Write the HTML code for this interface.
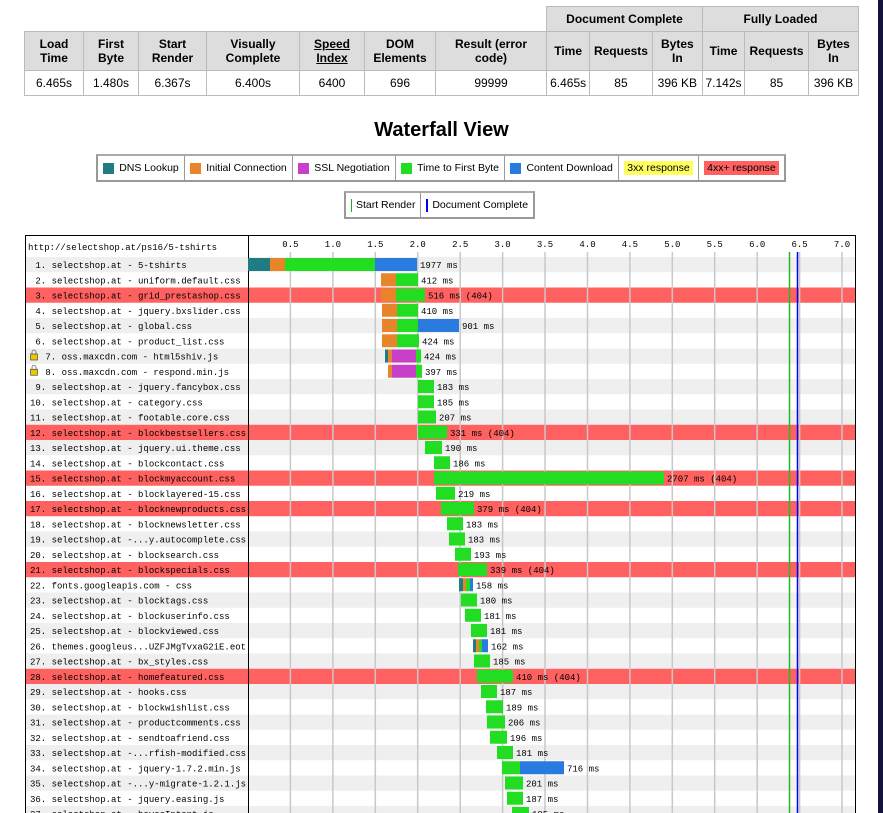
<!DOCTYPE html>
<html><head><meta charset="utf-8"><style>
body{margin:0;background:#fff;width:883px;height:813px;overflow:hidden;position:relative;font-family:"Liberation Sans",Arial,sans-serif}
table.r{position:absolute;left:24px;top:6px;border-collapse:collapse;font-size:12px}
table.r td,table.r th{border:1px solid #bbb;text-align:center;padding:0}
table.r th{background:#ddd;font-weight:bold}
h1{position:absolute;left:0;width:883px;top:119px;margin:0;text-align:center;font-size:20px;font-weight:bold}
.leg{position:absolute;border:2px solid #999;border-top-color:#aaa;display:flex;font-size:10.5px;height:24px;box-sizing:border-box;height:28px}
.leg div{border-left:1px solid #999;display:flex;align-items:center;padding:0 4px;white-space:nowrap;flex:auto;justify-content:center}
.leg div:first-child{border-left:none}
.sw{display:inline-block;width:11px;height:11px;margin-right:5px}
svg text{font-family:"Liberation Mono",monospace;font-size:9px;white-space:pre}
</style></head><body>
<table class="r">
<tr style="height:25px"><td colspan="7" style="border:none;border-bottom:1px solid #bbb;background:#fff"></td><th colspan="3" style="width:155px">Document Complete</th><th colspan="3">Fully Loaded</th></tr>
<tr style="height:39px"><th style="width:58px">Load<br>Time</th><th style="width:54px">First<br>Byte</th><th style="width:67px">Start<br>Render</th><th style="width:92px">Visually<br>Complete</th><th style="width:64px"><u>Speed<br>Index</u></th><th style="width:70px">DOM<br>Elements</th><th style="width:110px">Result (error<br>code)</th><th style="width:42px">Time</th><th style="width:61px">Requests</th><th style="width:49px">Bytes<br>In</th><th style="width:41px">Time</th><th style="width:63px">Requests</th><th style="width:49px">Bytes<br>In</th></tr>
<tr style="height:25px"><td>6.465s</td><td>1.480s</td><td>6.367s</td><td>6.400s</td><td>6400</td><td>696</td><td>99999</td><td>6.465s</td><td>85</td><td>396 KB</td><td>7.142s</td><td>85</td><td>396 KB</td></tr>
</table>
<h1>Waterfall View</h1>
<div class="leg" style="left:96px;top:154px;width:690px">
<div><span class="sw" style="background:#1f7c83"></span>DNS Lookup</div>
<div><span class="sw" style="background:#e8852b"></span>Initial Connection</div>
<div><span class="sw" style="background:#c840c8"></span>SSL Negotiation</div>
<div><span class="sw" style="background:#22dd22"></span>Time to First Byte</div>
<div><span class="sw" style="background:#2a7be0"></span>Content Download</div>
<div><span style="background:#ffff60;padding:1px 3px">3xx response</span></div>
<div><span style="background:#ff6161;padding:1px 3px">4xx+ response</span></div>
</div>
<div class="leg" style="left:344px;top:191px;width:191px">
<div><span style="display:inline-block;width:1px;height:13px;background:#2a2;margin-right:4px"></span>Start Render</div>
<div><span style="display:inline-block;width:2px;height:13px;background:#00f;margin-right:4px"></span>Document Complete</div>
</div>
<div style="position:absolute;left:878px;top:0;width:5px;height:813px;background:#14143a"></div>
<svg width="883" height="813" style="position:absolute;left:0;top:0">
<rect x="25.5" y="235.5" width="830" height="600" fill="#fff" stroke="#000"/>
<g id="bg">
<rect x="26" y="257" width="829" height="15.25" fill="#efefef"/>
<rect x="26" y="287.5" width="829" height="15.25" fill="#ff6161"/>
<rect x="26" y="318" width="829" height="15.25" fill="#efefef"/>
<rect x="26" y="348.5" width="829" height="15.25" fill="#efefef"/>
<rect x="26" y="379" width="829" height="15.25" fill="#efefef"/>
<rect x="26" y="409.5" width="829" height="15.25" fill="#efefef"/>
<rect x="26" y="424.75" width="829" height="15.25" fill="#ff6161"/>
<rect x="26" y="440" width="829" height="15.25" fill="#efefef"/>
<rect x="26" y="470.5" width="829" height="15.25" fill="#ff6161"/>
<rect x="26" y="501" width="829" height="15.25" fill="#ff6161"/>
<rect x="26" y="531.5" width="829" height="15.25" fill="#efefef"/>
<rect x="26" y="562" width="829" height="15.25" fill="#ff6161"/>
<rect x="26" y="592.5" width="829" height="15.25" fill="#efefef"/>
<rect x="26" y="623" width="829" height="15.25" fill="#efefef"/>
<rect x="26" y="653.5" width="829" height="15.25" fill="#efefef"/>
<rect x="26" y="668.75" width="829" height="15.25" fill="#ff6161"/>
<rect x="26" y="684" width="829" height="15.25" fill="#efefef"/>
<rect x="26" y="714.5" width="829" height="15.25" fill="#efefef"/>
<rect x="26" y="745" width="829" height="15.25" fill="#efefef"/>
<rect x="26" y="775.5" width="829" height="15.25" fill="#efefef"/>
<rect x="26" y="806" width="829" height="15.25" fill="#efefef"/>
</g>
<g stroke="#c8c8c8" stroke-width="1.5">
<line x1="290.4" y1="252" x2="290.4" y2="813"/><line x1="332.9" y1="252" x2="332.9" y2="813"/><line x1="375.3" y1="252" x2="375.3" y2="813"/><line x1="417.7" y1="252" x2="417.7" y2="813"/><line x1="460.2" y1="252" x2="460.2" y2="813"/><line x1="502.6" y1="252" x2="502.6" y2="813"/><line x1="545" y1="252" x2="545" y2="813"/><line x1="587.5" y1="252" x2="587.5" y2="813"/><line x1="629.9" y1="252" x2="629.9" y2="813"/><line x1="672.3" y1="252" x2="672.3" y2="813"/><line x1="714.7" y1="252" x2="714.7" y2="813"/><line x1="757.2" y1="252" x2="757.2" y2="813"/><line x1="799.6" y1="252" x2="799.6" y2="813"/><line x1="842" y1="252" x2="842" y2="813"/>
</g>
<line x1="248.5" y1="236" x2="248.5" y2="813" stroke="#000"/>
<g text-anchor="middle" fill="#000">
<text x="290.4" y="247">0.5</text><text x="332.9" y="247">1.0</text><text x="375.3" y="247">1.5</text><text x="417.7" y="247">2.0</text><text x="460.2" y="247">2.5</text><text x="502.6" y="247">3.0</text><text x="545" y="247">3.5</text><text x="587.5" y="247">4.0</text><text x="629.9" y="247">4.5</text><text x="672.3" y="247">5.0</text><text x="714.7" y="247">5.5</text><text x="757.2" y="247">6.0</text><text x="799.6" y="247">6.5</text><text x="842" y="247">7.0</text>
</g>
<text x="28" y="250">http://selectshop.at/ps16/5-tshirts</text>
<g>
<text x="35.4" y="268">1. selectshop.at - 5-tshirts</text>
<text x="35.4" y="283.25">2. selectshop.at - uniform.default.css</text>
<text x="35.4" y="298.5">3. selectshop.at - grid_prestashop.css</text>
<text x="35.4" y="313.75">4. selectshop.at - jquery.bxslider.css</text>
<text x="35.4" y="329">5. selectshop.at - global.css</text>
<text x="35.4" y="344.25">6. selectshop.at - product_list.css</text>
<text x="45.4" y="359.5">7. oss.maxcdn.com - html5shiv.js</text>
<text x="45.4" y="374.75">8. oss.maxcdn.com - respond.min.js</text>
<text x="35.4" y="390">9. selectshop.at - jquery.fancybox.css</text>
<text x="30" y="405.25">10. selectshop.at - category.css</text>
<text x="30" y="420.5">11. selectshop.at - footable.core.css</text>
<text x="30" y="435.75">12. selectshop.at - blockbestsellers.css</text>
<text x="30" y="451">13. selectshop.at - jquery.ui.theme.css</text>
<text x="30" y="466.25">14. selectshop.at - blockcontact.css</text>
<text x="30" y="481.5">15. selectshop.at - blockmyaccount.css</text>
<text x="30" y="496.75">16. selectshop.at - blocklayered-15.css</text>
<text x="30" y="512">17. selectshop.at - blocknewproducts.css</text>
<text x="30" y="527.25">18. selectshop.at - blocknewsletter.css</text>
<text x="30" y="542.5">19. selectshop.at -...y.autocomplete.css</text>
<text x="30" y="557.75">20. selectshop.at - blocksearch.css</text>
<text x="30" y="573">21. selectshop.at - blockspecials.css</text>
<text x="30" y="588.25">22. fonts.googleapis.com - css</text>
<text x="30" y="603.5">23. selectshop.at - blocktags.css</text>
<text x="30" y="618.75">24. selectshop.at - blockuserinfo.css</text>
<text x="30" y="634">25. selectshop.at - blockviewed.css</text>
<text x="30" y="649.25">26. themes.googleus...UZFJMgTvxaG2iE.eot</text>
<text x="30" y="664.5">27. selectshop.at - bx_styles.css</text>
<text x="30" y="679.75">28. selectshop.at - homefeatured.css</text>
<text x="30" y="695">29. selectshop.at - hooks.css</text>
<text x="30" y="710.25">30. selectshop.at - blockwishlist.css</text>
<text x="30" y="725.5">31. selectshop.at - productcomments.css</text>
<text x="30" y="740.75">32. selectshop.at - sendtoafriend.css</text>
<text x="30" y="756">33. selectshop.at -...rfish-modified.css</text>
<text x="30" y="771.25">34. selectshop.at - jquery-1.7.2.min.js</text>
<text x="30" y="786.5">35. selectshop.at -...y-migrate-1.2.1.js</text>
<text x="30" y="801.75">36. selectshop.at - jquery.easing.js</text>
<text x="30" y="817">37. selectshop.at - hoverIntent.js</text>
</g>
<g fill="#e8c800" stroke="#333" stroke-width="0.6">
<rect x="30.5" y="354" width="7" height="6"/><path d="M32 354v-2a2 2 0 0 1 4 0v2" fill="none"/>
<rect x="30.5" y="369.25" width="7" height="6"/><path d="M32 369.25v-2a2 2 0 0 1 4 0v2" fill="none"/>
</g>
<g>
<rect x="248" y="258" width="22" height="13" fill="#1f7c83"/><rect x="270" y="258" width="15" height="13" fill="#e8852b"/><rect x="285" y="258" width="90" height="13" fill="#22dd22"/><rect x="375" y="258" width="42" height="13" fill="#2a7be0"/>
<rect x="381" y="273.25" width="15" height="13" fill="#e8852b"/><rect x="396" y="273.25" width="22" height="13" fill="#22dd22"/>
<rect x="381" y="288.5" width="15" height="13" fill="#e8852b"/><rect x="396" y="288.5" width="29" height="13" fill="#22dd22"/>
<rect x="382" y="303.75" width="15" height="13" fill="#e8852b"/><rect x="397" y="303.75" width="21" height="13" fill="#22dd22"/>
<rect x="382" y="319" width="15" height="13" fill="#e8852b"/><rect x="397" y="319" width="21" height="13" fill="#22dd22"/><rect x="418" y="319" width="41" height="13" fill="#2a7be0"/>
<rect x="382" y="334.25" width="15" height="13" fill="#e8852b"/><rect x="397" y="334.25" width="22" height="13" fill="#22dd22"/>
<rect x="385" y="349.5" width="3" height="13" fill="#1f7c83"/><rect x="388" y="349.5" width="4" height="13" fill="#e8852b"/><rect x="392" y="349.5" width="24" height="13" fill="#c840c8"/><rect x="416" y="349.5" width="5" height="13" fill="#22dd22"/>
<rect x="388" y="364.75" width="4" height="13" fill="#e8852b"/><rect x="392" y="364.75" width="24" height="13" fill="#c840c8"/><rect x="416" y="364.75" width="6" height="13" fill="#22dd22"/>
<g fill="#22dd22">
<rect x="418" y="380" width="16" height="13"/>
<rect x="418" y="395.25" width="16" height="13"/>
<rect x="418" y="410.5" width="18" height="13"/>
<rect x="418" y="425.75" width="29" height="13"/>
<rect x="425" y="441" width="17" height="13"/>
<rect x="434" y="456.25" width="16" height="13"/>
<rect x="434" y="471.5" width="230" height="13"/>
<rect x="436" y="486.75" width="19" height="13"/>
<rect x="441" y="502" width="33" height="13"/>
<rect x="447" y="517.25" width="16" height="13"/>
<rect x="449" y="532.5" width="16" height="13"/>
<rect x="455" y="547.75" width="16" height="13"/>
<rect x="458" y="563" width="29" height="13"/>
<rect x="461" y="593.5" width="16" height="13"/>
<rect x="465" y="608.75" width="16" height="13"/>
<rect x="471" y="624" width="16" height="13"/>
<rect x="474" y="654.5" width="16" height="13"/>
<rect x="477" y="669.75" width="36" height="13"/>
<rect x="481" y="685" width="16" height="13"/>
<rect x="486" y="700.25" width="17" height="13"/>
<rect x="487" y="715.5" width="18" height="13"/>
<rect x="490" y="730.75" width="17" height="13"/>
<rect x="497" y="746" width="16" height="13"/>
<rect x="502" y="761.25" width="18" height="13"/>
<rect x="505" y="776.5" width="18" height="13"/>
<rect x="507" y="791.75" width="16" height="13"/>
<rect x="512" y="807" width="17" height="13"/>
</g>
<rect x="520" y="761.25" width="44" height="13" fill="#2a7be0"/>
<rect x="459" y="578.25" width="4" height="13" fill="#1f7c83"/><rect x="463" y="578.25" width="3" height="13" fill="#e8852b"/><rect x="466" y="578.25" width="4" height="13" fill="#22dd22"/><rect x="470" y="578.25" width="3" height="13" fill="#2a7be0"/>
<rect x="473" y="639.25" width="3" height="13" fill="#1f7c83"/><rect x="476" y="639.25" width="3" height="13" fill="#e8852b"/><rect x="479" y="639.25" width="3" height="13" fill="#22dd22"/><rect x="482" y="639.25" width="6" height="13" fill="#2a7be0"/>
</g>
<g>
<text x="420" y="268">1977 ms</text>
<text x="421" y="283.25">412 ms</text>
<text x="428" y="298.5">516 ms (404)</text>
<text x="421" y="313.75">410 ms</text>
<text x="462" y="329">901 ms</text>
<text x="422" y="344.25">424 ms</text>
<text x="424" y="359.5">424 ms</text>
<text x="425" y="374.75">397 ms</text>
<text x="437" y="390">183 ms</text>
<text x="437" y="405.25">185 ms</text>
<text x="439" y="420.5">207 ms</text>
<text x="450" y="435.75">331 ms (404)</text>
<text x="445" y="451">190 ms</text>
<text x="453" y="466.25">186 ms</text>
<text x="667" y="481.5">2707 ms (404)</text>
<text x="458" y="496.75">219 ms</text>
<text x="477" y="512">379 ms (404)</text>
<text x="466" y="527.25">183 ms</text>
<text x="468" y="542.5">183 ms</text>
<text x="474" y="557.75">193 ms</text>
<text x="490" y="573">339 ms (404)</text>
<text x="476" y="588.25">158 ms</text>
<text x="480" y="603.5">180 ms</text>
<text x="484" y="618.75">181 ms</text>
<text x="490" y="634">181 ms</text>
<text x="491" y="649.25">162 ms</text>
<text x="493" y="664.5">185 ms</text>
<text x="516" y="679.75">410 ms (404)</text>
<text x="500" y="695">187 ms</text>
<text x="506" y="710.25">189 ms</text>
<text x="508" y="725.5">206 ms</text>
<text x="510" y="740.75">196 ms</text>
<text x="516" y="756">181 ms</text>
<text x="567" y="771.25">716 ms</text>
<text x="526" y="786.5">201 ms</text>
<text x="526" y="801.75">187 ms</text>
<text x="532" y="817">185 ms</text>
</g>
<line x1="789.5" y1="252" x2="789.5" y2="813" stroke="#22bb22" stroke-width="1.5"/>
<line x1="797.5" y1="252" x2="797.5" y2="813" stroke="#0000ff" stroke-width="1.5"/>
</svg>
</body></html>
